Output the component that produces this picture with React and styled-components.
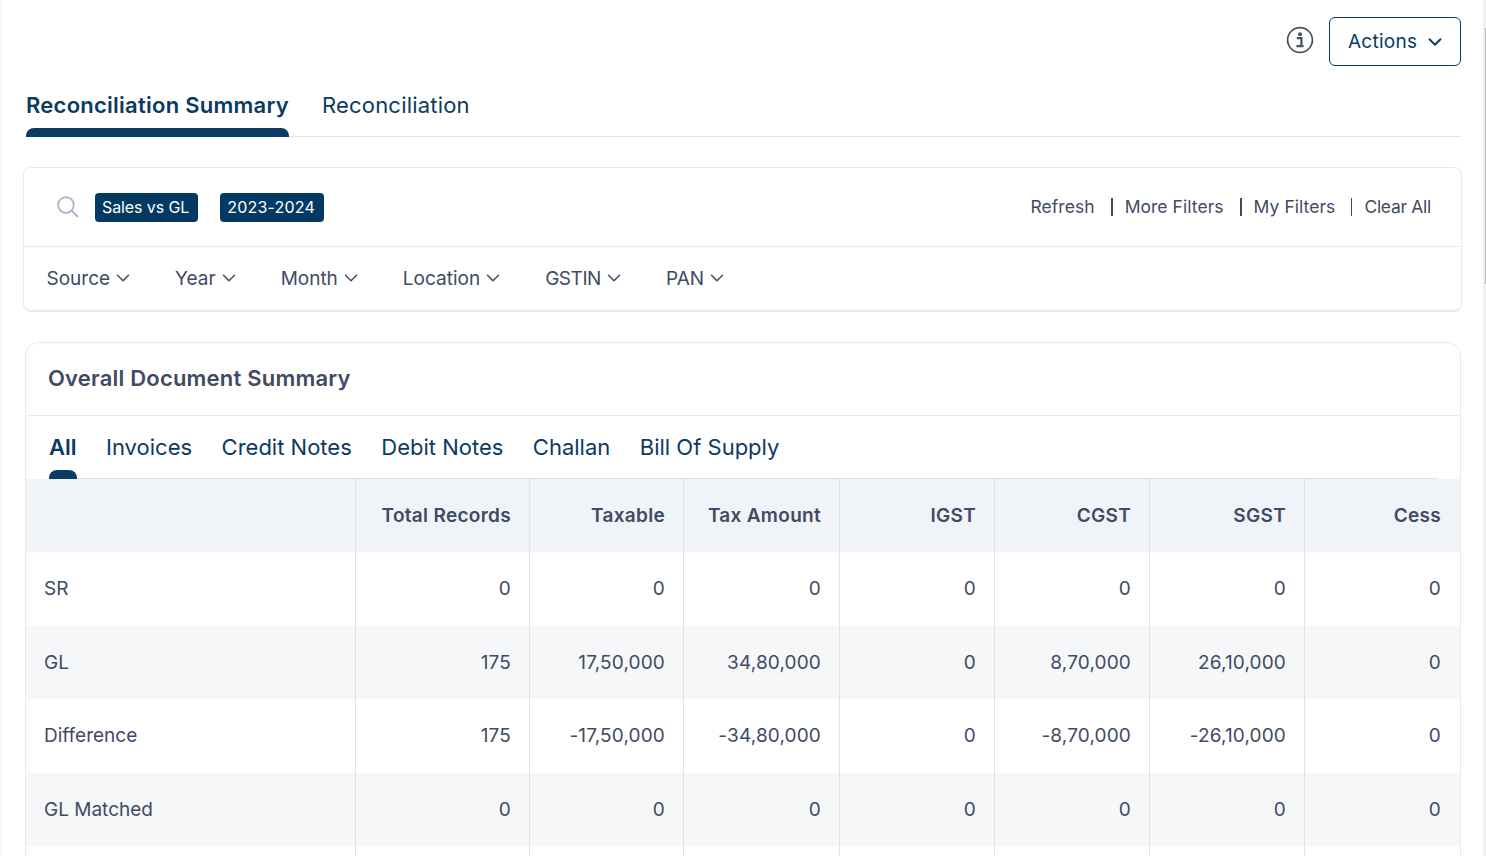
import React from "react";
import styled, { createGlobalStyle } from "styled-components";
import { ChevronDown } from "lucide-react";

const navy = "#0b3a63";
const ink = "#414a63";

const filters = ["Source", "Year", "Month", "Location", "GSTIN", "PAN"];
const docTabs = ["All", "Invoices", "Credit Notes", "Debit Notes", "Challan", "Bill Of Supply"];
const columns = ["Total Records", "Taxable", "Tax Amount", "IGST", "CGST", "SGST", "Cess"];
const rows = [
  ["SR", "0", "0", "0", "0", "0", "0", "0"],
  ["GL", "175", "17,50,000", "34,80,000", "0", "8,70,000", "26,10,000", "0"],
  ["Difference", "175", "-17,50,000", "-34,80,000", "0", "-8,70,000", "-26,10,000", "0"],
  ["GL Matched", "0", "0", "0", "0", "0", "0", "0"],
  ["", "", "", "", "", "", "", ""],
];

const App = () => {
  return (
    <>
      <GlobalStyle />
      <Page>
        <Main>
          <TopBar>
            <InfoIcon width="28" height="28" viewBox="0 0 28 28" fill="none">
              <circle cx="14" cy="14" r="12.4" stroke="#4a5064" strokeWidth="1.7" />
              <circle cx="14" cy="8.2" r="2" fill="#4a5064" />
              <path d="M10.8 12.2h4.6v7.6M10.4 20.2h7.2" stroke="#4a5064" strokeWidth="2.2" />
            </InfoIcon>
            <ActionsButton>
              <span>Actions</span>
              <ChevronDown size={22} strokeWidth={2.1} />
            </ActionsButton>
          </TopBar>

          <MainTabs>
            <MainTab $active>Reconciliation Summary</MainTab>
            <MainTab>Reconciliation</MainTab>
          </MainTabs>

          <FilterCard>
            <FilterTop>
              <SearchGroup>
                <svg width="22" height="22" viewBox="0 0 22 22" fill="none" stroke="#a9b3c9" strokeWidth="1.8">
                  <circle cx="9" cy="9" r="7.8" />
                  <path d="M14.6 14.6L21 21" />
                </svg>
                <Tag $gap={16} $spacing={-0.1}>Sales vs GL</Tag>
                <Tag $gap={22} $spacing={0.2}>2023-2024</Tag>
              </SearchGroup>
              <LinkGroup>
                <FilterLink>Refresh</FilterLink>
                <Divider $w={2} />
                <FilterLink>More Filters</FilterLink>
                <Divider $w={2} />
                <FilterLink>My Filters</FilterLink>
                <Divider $w={1} />
                <FilterLink $tight>Clear All</FilterLink>
              </LinkGroup>
            </FilterTop>
            <FilterBottom>
              {filters.map((f) => (
                <Dropdown key={f} $tight={f === "GSTIN"}>
                  <span>{f}</span>
                  <ChevronDown size={22} strokeWidth={1.6} />
                </Dropdown>
              ))}
            </FilterBottom>
          </FilterCard>

          <SummaryCard>
            <SummaryTitle>Overall Document Summary</SummaryTitle>
            <DocTabs>
              {docTabs.map((t, i) => (
                <DocTab key={t} $active={i === 0}>
                  {t}
                </DocTab>
              ))}
            </DocTabs>
            <Table>
              <thead>
                <tr>
                  <HeadCell />
                  {columns.map((c) => (
                    <HeadCell key={c}>{c}</HeadCell>
                  ))}
                </tr>
              </thead>
              <tbody>
                {rows.map((r, i) => (
                  <Row key={i} $shaded={i % 2 === 1}>
                    {r.map((v, j) => (
                      <Cell key={j}>{v}</Cell>
                    ))}
                  </Row>
                ))}
              </tbody>
            </Table>
          </SummaryCard>
        </Main>
        <ScrollTrack>
          <ScrollThumb />
        </ScrollTrack>
      </Page>
    </>
  );
};

export default App;

const GlobalStyle = createGlobalStyle`
  html, body {
    margin: 0;
    height: 100%;
    overflow: hidden;
    background: #fff;
    font-family: Inter, "Liberation Sans", sans-serif;
  }
`;

const Page = styled.div`
  display: flex;
  height: 856px;
  overflow: hidden;
  border-left: 2px solid #f3f6fa;
`;

const Main = styled.div`
  flex: 1;
  min-width: 0;
  padding: 17px 22px 0 21px;
`;

const ScrollTrack = styled.div`
  display: flex;
  justify-content: flex-end;
  width: 3px;
  background: #f1f1f1;
  padding-top: 28px;
`;

const ScrollThumb = styled.div`
  width: 1px;
  height: 256px;
  background: #b9b9b9;
`;

const TopBar = styled.div`
  display: flex;
  justify-content: flex-end;
  align-items: center;
  gap: 15px;
  height: 49px;
`;

const InfoIcon = styled.svg`
  display: block;
  margin-bottom: 3px;
`;

const ActionsButton = styled.button`
  display: flex;
  align-items: center;
  justify-content: space-between;
  box-sizing: border-box;
  width: 132px;
  height: 49px;
  padding: 0 14px 0 18px;
  background: #fff;
  border: 1px solid ${navy};
  border-radius: 6px;
  color: ${navy};
  font: 400 19px Inter, sans-serif;
  letter-spacing: 0.25px;
`;

const MainTabs = styled.div`
  display: flex;
  gap: 33px;
  height: 71px;
  margin-left: 3px;
  border-bottom: 1px solid #e1e3e8;
  box-sizing: border-box;
`;

const MainTab = styled.div`
  position: relative;
  padding-top: 25px;
  font-size: 22px;
  line-height: 28px;
  letter-spacing: ${(p) => (p.$active ? "0.25px" : "0.2px")};
  font-weight: ${(p) => (p.$active ? 600 : 400)};
  color: ${navy};

  ${(p) =>
    p.$active &&
    `
    &::after {
      content: "";
      position: absolute;
      left: 0;
      right: 0;
      bottom: -1px;
      height: 9px;
      background: ${navy};
      border-radius: 8px 8px 0 0;
    }
  `}
`;

const FilterCard = styled.div`
  margin: 30px -1px 0 0;
  height: 145px;
  box-sizing: border-box;
  border: 1px solid #e8eaef;
  border-bottom: 2px solid #e6e9ee;
  border-radius: 8px;
  background: #fff;
`;

const FilterTop = styled.div`
  display: flex;
  align-items: center;
  justify-content: space-between;
  height: 78px;
  padding: 0 30px 0 33px;
  border-bottom: 1px solid #e8eaef;
`;

const SearchGroup = styled.div`
  display: flex;
  align-items: center;
`;

const Tag = styled.span`
  display: block;
  margin-left: ${(p) => p.$gap}px;
  padding: 0 9px 0 7px;
  height: 29px;
  line-height: 29px;
  background: #033a63;
  color: #fff;
  border-radius: 4px;
  font-size: 16px;
  letter-spacing: ${(p) => p.$spacing}px;
`;

const LinkGroup = styled.div`
  display: flex;
  align-items: center;
  padding-bottom: 1px;
`;

const FilterLink = styled.span`
  color: ${ink};
  font-size: 17.5px;
  letter-spacing: ${(p) => (p.$tight ? "-0.3px" : "0.05px")};
`;

const Divider = styled.i`
  display: block;
  width: ${(p) => p.$w}px;
  height: 18px;
  margin: 0 12px 0 16px;
  background: ${ink};
`;

const FilterBottom = styled.div`
  display: flex;
  align-items: center;
  gap: 41px;
  height: 64px;
  padding: 0 0 2px 22.5px;
  box-sizing: border-box;
`;

const Dropdown = styled.div`
  display: flex;
  align-items: center;
  gap: 2px;
  color: ${ink};
  font-size: 19px;
  letter-spacing: ${(p) => (p.$tight ? "-0.45px" : "0")};
`;

const SummaryCard = styled.div`
  margin: 30px 0 0 2px;
  border: 1px solid #e8eaef;
  border-bottom: none;
  border-radius: 14px 14px 0 0;
  background: #fff;
`;

const SummaryTitle = styled.div`
  height: 72px;
  line-height: 71px;
  padding-left: 22px;
  font-size: 22px;
  font-weight: 600;
  letter-spacing: 0.2px;
  color: ${ink};
  border-bottom: 1px solid #e8eaef;
`;

const DocTabs = styled.div`
  display: flex;
  gap: 29.5px;
  height: 63px;
  margin: 0 22px 0 23px;
  box-sizing: border-box;
  border-bottom: 1px solid #dfe2e7;
`;

const DocTab = styled.div`
  position: relative;
  padding-top: 17px;
  font-size: 22px;
  line-height: 28px;
  font-weight: ${(p) => (p.$active ? 600 : 400)};
  color: ${navy};

  ${(p) =>
    p.$active &&
    `
    &::after {
      content: "";
      position: absolute;
      left: 0;
      right: 0;
      bottom: -1px;
      height: 9px;
      background: ${navy};
      border-radius: 8px 8px 0 0;
    }
  `}
`;

const Table = styled.table`
  width: 100%;
  table-layout: fixed;
  border-collapse: separate;
  border-spacing: 0;

  th:nth-child(1) { width: 330px; }
  th:nth-child(2) { width: 174px; }
  th:nth-child(3) { width: 154px; }
  th:nth-child(4) { width: 156px; }
  th:nth-child(5), th:nth-child(6), th:nth-child(7), th:nth-child(8) { width: 155px; }
`;

const HeadCell = styled.th`
  box-sizing: border-box;
  height: 73px;
  padding: 0 18px;
  background: #f0f3f7;
  color: ${ink};
  font-weight: 600;
  font-size: 19px;
  letter-spacing: 0.3px;
  text-align: right;
  border-right: 1px solid #dfe2e7;
  &:last-child { border-right: none; padding-right: 19px; }
`;

const Row = styled.tr`
  background: ${(p) => (p.$shaded ? "#f6f7f9" : "#fff")};
`;

const Cell = styled.td`
  height: 73.6px;
  box-sizing: border-box;
  padding: 0 18px;
  color: ${ink};
  font-size: 19px;
  letter-spacing: 0.15px;
  text-align: right;
  border-right: 1px solid #dfe2e7;
  &:first-child { text-align: left; letter-spacing: 0; }
  &:last-child { border-right: none; padding-right: 19px; }
`;
